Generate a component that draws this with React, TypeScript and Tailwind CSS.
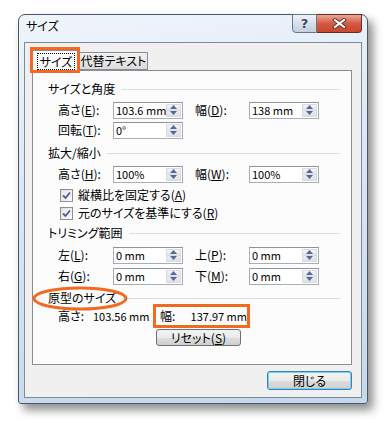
import React from 'react';

const FONT = "font-['Noto_Sans_CJK_JP','Noto_Sans',sans-serif] [font-feature-settings:'palt']";

const Arrow = ({ up }: { up?: boolean }) => (
  <svg width="7" height="4" viewBox="0 0 7 4">
    <path d={up ? 'M0 4 L3.5 0 L7 4 Z' : 'M0 0 L3.5 4 L7 0 Z'} fill="#56699a" />
  </svg>
);

const SpinBox = ({ value }: { value: string }) => (
  <div className="w-[70px] h-[17px] border border-[#a9aeb6] border-t-[#8e949c] bg-white flex items-stretch">
    <span className="flex-1 pl-[2px] text-[11px] leading-[15px] text-black overflow-hidden">{value}</span>
    <div className="w-[15px] my-px mr-px flex flex-col shrink-0">
      <div className="flex-1 flex items-center justify-center bg-gradient-to-b from-[#f6f6f8] to-[#e2e4e8] border border-[#d8dbe0]">
        <Arrow up />
      </div>
      <div className="flex-1 flex items-center justify-center bg-gradient-to-b from-[#eceef1] to-[#dcdfe4] border border-t-0 border-[#d8dbe0]">
        <Arrow />
      </div>
    </div>
  </div>
);

const Mn = ({ c }: { c: string }) => <span className="underline underline-offset-[1px]">{c}</span>;

const GroupTitle = ({ text, mt }: { text: string; mt: string }) => (
  <div className={`flex items-center h-[20px] pl-[15px] ${mt}`}>
    <span className="leading-[16px]">{text}</span>
    <div className="flex-1 h-px bg-[#d5dde7] ml-[6px] mr-[11px]" />
  </div>
);

const Row = ({ l1, v1, l2, v2, mt }: { l1: React.ReactNode; v1: string; l2?: React.ReactNode; v2?: string; mt: string }) => (
  <div className={`flex items-center h-[20px] pl-[25px] ${mt}`}>
    <span className="w-[55px] leading-[16px]">{l1}</span>
    <SpinBox value={v1} />
    {l2 && (
      <>
        <span className="w-[54px] ml-[12px] leading-[16px]">{l2}</span>
        <SpinBox value={v2 || ''} />
      </>
    )}
  </div>
);

const Check = ({ label, mt }: { label: React.ReactNode; mt: string }) => (
  <div className={`flex items-center h-[18px] pl-[27px] ${mt}`}>
    <div className="w-[13px] h-[13px] border border-[#8f8f8f] bg-gradient-to-br from-[#dcdcdc] to-[#fbfbfb] p-px">
      <div className="w-full h-full bg-gradient-to-br from-[#e7e9ee] to-[#f8f9fb] flex items-center justify-center">
        <svg width="9" height="9" viewBox="0 0 9 9">
          <path d="M1 4.5 L3.5 7 L8 1.5" stroke="#4a5b92" strokeWidth="1.8" fill="none" />
        </svg>
      </div>
    </div>
    <span className="ml-[5px] leading-[16px]">{label}</span>
  </div>
);

export default function App() {
  return (
    <div className={`w-[384px] h-[423px] bg-white relative overflow-hidden pt-[14px] pl-[18px] text-[12px] text-black whitespace-nowrap ${FONT}`}>
      <div className="w-[350px] h-[390px] rounded-t-[7px] rounded-b-[3px] border border-[#4b5663] bg-[linear-gradient(172deg,#eef5fc_0%,#dce9f6_35%,#cfe0f1_70%,#c4d9ee_100%)] shadow-[5px_6px_10px_rgba(0,0,0,0.45)] flex flex-col">
        {/* title bar */}
        <div className="h-[27px] flex items-start">
          <span className="pl-[7px] pt-[3px] leading-[16px] text-[12px] [text-shadow:0_0_6px_#ffffff]">サイズ</span>
          <div className="ml-auto mr-[5px] -mt-px flex">
            <div className="w-[25px] h-[19px] border border-[#68778a] rounded-bl-[4px] bg-gradient-to-b from-[#eef3f9] via-[#d6e0eb] to-[#c2cfdd] flex items-center justify-center">
              <span className="font-['DejaVu_Sans',sans-serif] font-bold text-[13px] leading-[13px] text-[#3c4654] [text-shadow:0_0_2px_#ffffff]">?</span>
            </div>
            <div className="w-[45px] h-[19px] border border-l-0 border-[#6e2a22] rounded-br-[4px] bg-gradient-to-b from-[#e9a797] via-[#d45a43] to-[#c8472f] flex items-center justify-center">
              <svg width="15" height="11" viewBox="0 0 15 11">
                <path d="M3 2 L12 9 M12 2 L3 9" stroke="#5b3028" strokeWidth="4" strokeLinecap="square" />
                <path d="M3 2 L12 9 M12 2 L3 9" stroke="#ffffff" strokeWidth="2.2" strokeLinecap="square" />
              </svg>
            </div>
          </div>
        </div>

        {/* content */}
        <div className="mx-[5px] w-[338px] h-[356px] border border-[#808a96] bg-[#f0f0f0] flex flex-col">
          {/* tabs */}
          <div className="ml-[7px] mt-[7px] h-[21px] flex items-end relative z-10">
            <div className="w-[48px] h-[21px] border border-b-0 border-[#898c95] bg-[#fcfcfc] rounded-t-[2px] flex items-center justify-center">
              <span className="px-[2px] leading-[15px] outline outline-1 outline-dotted outline-black">サイズ</span>
            </div>
            <div className="w-[68px] h-[18px] mb-px border border-l-0 border-[#898c95] bg-gradient-to-b from-[#f2f2f2] to-[#dcdcdc] flex items-center justify-center">
              <span className="leading-[16px]">代替テキスト</span>
            </div>
          </div>

          {/* panel */}
          <div className="ml-[7px] -mt-px w-[320px] h-[295px] border border-[#898c95] bg-[#fcfcfc] pt-[8px] flex flex-col">
            <GroupTitle text="サイズと角度" mt="" />
            <Row mt="mt-px" l1={<>高さ(<Mn c="E" />):</>} v1="103.6 mm" l2={<>幅(<Mn c="D" />):</>} v2="138 mm" />
            <Row mt="" l1={<>回転(<Mn c="T" />):</>} v1="0°" />
            <GroupTitle text="拡大/縮小" mt="mt-[3px]" />
            <Row mt="mt-px" l1={<>高さ(<Mn c="H" />):</>} v1="100%" l2={<>幅(<Mn c="W" />):</>} v2="100%" />
            <Check mt="mt-[2px]" label={<>縦横比を固定する(<Mn c="A" />)</>} />
            <Check mt="" label={<>元のサイズを基準にする(<Mn c="R" />)</>} />
            <GroupTitle text="トリミング範囲" mt="mt-px" />
            <Row mt="mt-[2px]" l1={<>左(<Mn c="L" />):</>} v1="0 mm" l2={<>上(<Mn c="P" />):</>} v2="0 mm" />
            <Row mt="mt-px" l1={<>右(<Mn c="G" />):</>} v1="0 mm" l2={<>下(<Mn c="M" />):</>} v2="0 mm" />
            <GroupTitle text="原型のサイズ" mt="mt-[2px]" />
            <div className="flex items-center h-[24px] pl-[25px] -mt-[4px]">
              <span className="w-[35px] leading-[16px]">高さ:</span>
              <span className="w-[60px] leading-[16px] text-[11px]">103.56 mm</span>
              <div className="w-[97px] h-[24px] border-[3px] border-[#f26a21] flex items-center pl-[4px]">
                <span className="w-[31px] leading-[16px]">幅:</span>
                <span className="leading-[16px] text-[11px]">137.97 mm</span>
              </div>
            </div>
            <div className="pl-[123px] mt-px">
              <div className="w-[85px] h-[17px] border border-[#707070] rounded-[3px] bg-[linear-gradient(#f3f3f3_0%,#ebebeb_50%,#dddddd_51%,#cfcfcf_100%)] flex items-center justify-center">
                <span className="leading-[15px]">リセット(<Mn c="S" />)</span>
              </div>
            </div>
          </div>

          {/* footer */}
          <div className="flex justify-end pr-[9px] mt-[6px]">
            <div className="w-[85px] h-[19px] border border-[#3c7fb1] rounded-[3px] shadow-[inset_0_0_0_1px_#6fd6fb] bg-[linear-gradient(#f3f3f3_0%,#ebebeb_50%,#dddddd_51%,#cfcfcf_100%)] flex items-center justify-center">
              <span className="leading-[16px]">閉じる</span>
            </div>
          </div>
        </div>
      </div>

      {/* annotations */}
      <div className="absolute left-[30px] top-[47px] w-[50px] h-[26px] border-[3px] border-[#f26a21] z-20" />
      <svg className="absolute left-[32px] top-[286px] z-20" width="96" height="25" viewBox="0 0 96 25">
        <ellipse cx="48" cy="12.5" rx="46" ry="10.5" fill="none" stroke="#f26a21" strokeWidth="3" />
      </svg>
    </div>
  );
}
